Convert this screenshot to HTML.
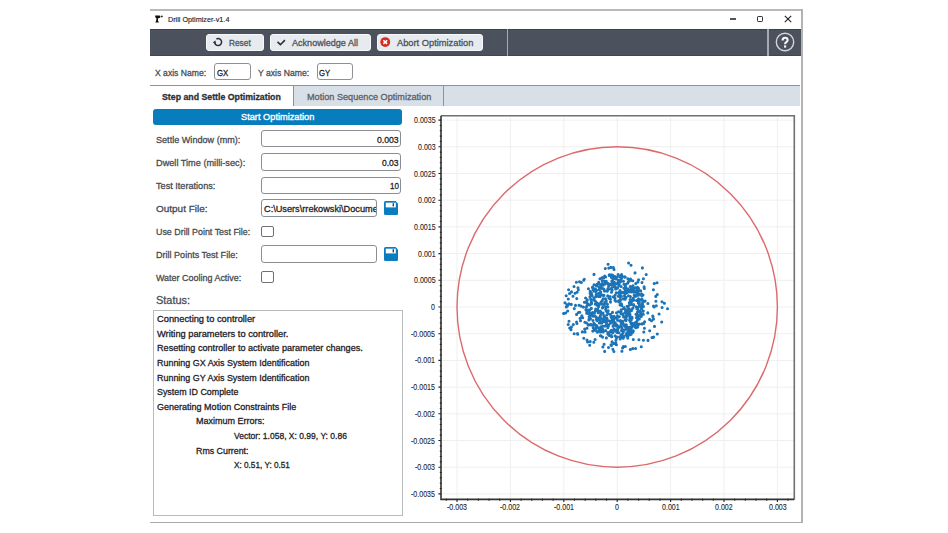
<!DOCTYPE html>
<html><head><meta charset="utf-8"><style>
html,body{margin:0;padding:0;background:#fff;width:948px;height:533px;overflow:hidden}
body{position:relative;font-family:"Liberation Sans",sans-serif}
.r{position:absolute;box-sizing:content-box}
.t{position:absolute;white-space:nowrap;line-height:normal;transform-origin:0 0}
</style></head><body>
<div class="r" style="left:150px;top:9.4px;width:652.6px;height:1.8px;background:#b9b9b9"></div>
<div class="r" style="left:801px;top:9.4px;width:1.6px;height:514px;background:#b3b3b3"></div>
<div class="r" style="left:150px;top:521.5px;width:652px;height:1.6px;background:#a9a9a9"></div>
<svg class="r" style="left:155px;top:15px" width="8" height="8" viewBox="0 0 8 8">
<path d="M0.2 0.4 H4.0 Q5.5 0.4 5.5 1.8 Q5.5 3.1 4.0 3.1 H3.3 L2.9 5.6 L3.9 7.6 H0.4 L1.2 5.6 L1.5 3.1 Q0.2 3.1 0.2 1.8 Z" fill="#111"/>
<rect x="6.0" y="0.7" width="1.7" height="1.5" fill="#222"/></svg>
<div class="t" style="transform:scaleX(0.8923);left:167.9px;top:15px;font-size:8.1px;color:#1d1d2a;font-weight:normal;-webkit-text-stroke:0.15px #1d1d2a;">Drill Optimizer-v1.4</div>
<div class="r" style="left:729.6px;top:18.3px;width:6px;height:1.4px;background:#555"></div>
<div class="r" style="left:756.8px;top:15.6px;width:4.3px;height:4.3px;border:1.2px solid #333;border-radius:1.2px"></div>
<svg class="r" style="left:784px;top:15px" width="8" height="8" viewBox="0 0 8 8"><path d="M0.8 0.8 L7.2 7.2 M7.2 0.8 L0.8 7.2" stroke="#222" stroke-width="1.1"/></svg>
<div class="r" style="left:150px;top:28.6px;width:651px;height:27.2px;background:#4b525e"></div>
<div class="r" style="left:150px;top:28.6px;width:651px;height:1.2px;background:#3a4149"></div>
<div class="r" style="left:150px;top:54.8px;width:651px;height:1px;background:#40474f"></div>
<div class="r" style="left:506.6px;top:28.6px;width:1.6px;height:27.2px;background:#a4aab1"></div>
<div class="r" style="left:767px;top:28.6px;width:1.6px;height:27.2px;background:#a4aab1"></div>
<div class="r" style="left:206.2px;top:33.6px;width:55.4px;height:15.0px;background:#e7eaee;border:1px solid #f7f8fa;border-radius:3px"></div>
<div class="r" style="left:269.8px;top:33.6px;width:99.0px;height:15.0px;background:#e7eaee;border:1px solid #f7f8fa;border-radius:3px"></div>
<div class="r" style="left:376.9px;top:33.6px;width:104.0px;height:15.0px;background:#e7eaee;border:1px solid #f7f8fa;border-radius:3px"></div>
<svg class="r" style="left:212px;top:36.3px" width="12" height="12" viewBox="0 0 12 12"><path d="M4.4 3.0 A3.5 3.5 0 1 1 2.6 6.4" fill="none" stroke="#2b2e33" stroke-width="1.5"/><path d="M0.8 6.2 L3.6 4.6 L3.8 7.9 Z" fill="#2b2e33"/></svg>
<div class="t" style="transform:scaleX(0.8573);left:229px;top:37px;font-size:9.7px;color:#4a515b;font-weight:normal;-webkit-text-stroke:0.3px #4a515b;">Reset</div>
<svg class="r" style="left:275px;top:37px" width="11" height="11" viewBox="0 0 11 11"><path d="M2.5 4.9 L5.4 7.7 L9.9 3.1" fill="none" stroke="#2b2e33" stroke-width="1.6"/></svg>
<div class="t" style="transform:scaleX(0.9355);left:292.4px;top:37px;font-size:9.7px;color:#4a515b;font-weight:normal;-webkit-text-stroke:0.3px #4a515b;">Acknowledge All</div>
<svg class="r" style="left:380px;top:36px" width="12" height="12" viewBox="0 0 12 12"><circle cx="5.25" cy="6.1" r="4.95" fill="#d52b20"/><path d="M3.4 4.25 L7.1 7.95 M7.1 4.25 L3.4 7.95" stroke="#fff" stroke-width="1.7"/></svg>
<div class="t" style="transform:scaleX(0.9587);left:397px;top:37px;font-size:9.7px;color:#4a515b;font-weight:normal;-webkit-text-stroke:0.3px #4a515b;">Abort Optimization</div>
<svg class="r" style="left:775px;top:32px" width="20" height="20" viewBox="0 0 20 20"><circle cx="10" cy="10" r="8.7" fill="none" stroke="#d2d6da" stroke-width="1.4"/>
<path d="M7.6 8.4 Q7.6 5.8 10.1 5.8 Q12.6 5.8 12.6 8.1 Q12.6 9.5 11.2 10.2 Q10.1 10.8 10.1 12.2" fill="none" stroke="#f6f7f8" stroke-width="2.1"/><rect x="9" y="13.4" width="2.2" height="2.2" fill="#f6f7f8"/></svg>
<div class="t" style="transform:scaleX(0.8770);left:155.4px;top:67px;font-size:9.8px;color:#464b53;font-weight:normal;-webkit-text-stroke:0.3px #464b53;">X axis Name:</div>
<div class="r" style="left:214.2px;top:63.4px;width:34.6px;height:15px;border:1.2px solid #8d9196;border-radius:3px;background:#fff"></div>
<div class="t" style="transform:scaleX(0.8071);left:216.5px;top:67px;font-size:9.7px;color:#1a1a1a;font-weight:normal;-webkit-text-stroke:0.3px #1a1a1a;">GX</div>
<div class="t" style="transform:scaleX(0.8798);left:258.2px;top:67px;font-size:9.8px;color:#464b53;font-weight:normal;-webkit-text-stroke:0.3px #464b53;">Y axis Name:</div>
<div class="r" style="left:316.7px;top:63.4px;width:34.6px;height:15px;border:1.2px solid #8d9196;border-radius:3px;background:#fff"></div>
<div class="t" style="transform:scaleX(0.7929);left:318.8px;top:67px;font-size:9.7px;color:#1a1a1a;font-weight:normal;-webkit-text-stroke:0.3px #1a1a1a;">GY</div>
<div class="r" style="left:293.5px;top:86px;width:506.5px;height:20px;background:#d9dfe6"></div>
<div class="r" style="left:150px;top:85px;width:650px;height:1.2px;background:#8e9399"></div>
<div class="r" style="left:293px;top:86px;width:1.2px;height:20px;background:#8e9399"></div>
<div class="r" style="left:443px;top:86px;width:1.2px;height:20px;background:#8e9399"></div>
<div class="t" style="transform:scaleX(0.9537);left:162.4px;top:92px;font-size:9.2px;color:#2c3038;font-weight:bold;-webkit-text-stroke:0.3px #2c3038;">Step and Settle Optimization</div>
<div class="t" style="transform:scaleX(0.9607);left:306.6px;top:91px;font-size:9.5px;color:#59606a;font-weight:normal;-webkit-text-stroke:0.3px #59606a;">Motion Sequence Optimization</div>
<div class="r" style="left:152.7px;top:109px;width:249.2px;height:15.6px;background:#077dbd;border-radius:3px"></div>
<div class="t" style="transform:scaleX(0.9427);left:240.6px;top:111px;font-size:9.8px;color:#fff;font-weight:normal;-webkit-text-stroke:0.35px #fff;">Start Optimization</div>
<div class="t" style="transform:scaleX(0.9283);left:155.6px;top:134px;font-size:9.8px;color:#464b53;font-weight:normal;-webkit-text-stroke:0.3px #464b53;">Settle Window (mm):</div>
<div class="t" style="transform:scaleX(0.9365);left:155.6px;top:157px;font-size:9.8px;color:#464b53;font-weight:normal;-webkit-text-stroke:0.3px #464b53;">Dwell Time (milli-sec):</div>
<div class="t" style="transform:scaleX(0.9307);left:155.6px;top:180px;font-size:9.8px;color:#464b53;font-weight:normal;-webkit-text-stroke:0.3px #464b53;">Test Iterations:</div>
<div class="t" style="transform:scaleX(1.0170);left:155.6px;top:203px;font-size:9.8px;color:#464b53;font-weight:normal;-webkit-text-stroke:0.3px #464b53;">Output File:</div>
<div class="t" style="transform:scaleX(0.9074);left:155.6px;top:226px;font-size:9.8px;color:#464b53;font-weight:normal;-webkit-text-stroke:0.3px #464b53;">Use Drill Point Test File:</div>
<div class="t" style="transform:scaleX(0.9225);left:155.6px;top:249px;font-size:9.8px;color:#464b53;font-weight:normal;-webkit-text-stroke:0.3px #464b53;">Drill Points Test File:</div>
<div class="t" style="transform:scaleX(0.9143);left:155.6px;top:272px;font-size:9.8px;color:#464b53;font-weight:normal;-webkit-text-stroke:0.3px #464b53;">Water Cooling Active:</div>
<div class="r" style="left:261.3px;top:130.3px;width:137.3px;height:15.2px;border:1.2px solid #8a8e93;border-radius:3px;background:#fff"></div>
<div class="r" style="left:261.3px;top:153.4px;width:137.3px;height:15.2px;border:1.2px solid #8a8e93;border-radius:3px;background:#fff"></div>
<div class="r" style="left:261.3px;top:176.5px;width:137.3px;height:15.1px;border:1.2px solid #8a8e93;border-radius:3px;background:#fff"></div>
<div class="r" style="left:261.3px;top:199.3px;width:113.3px;height:15.6px;border:1.2px solid #8a8e93;border-radius:3px;background:#fff"></div>
<div class="r" style="left:261.3px;top:245.4px;width:113.3px;height:15.6px;border:1.2px solid #8a8e93;border-radius:3px;background:#fff"></div>
<div class="t" style="transform:scaleX(0.9125);left:377.2px;top:134px;font-size:9.5px;color:#222;font-weight:normal;-webkit-text-stroke:0.3px #222;">0.003</div>
<div class="t" style="transform:scaleX(0.8973);left:382.3px;top:157px;font-size:9.5px;color:#222;font-weight:normal;-webkit-text-stroke:0.3px #222;">0.03</div>
<div class="t" style="transform:scaleX(0.8414);left:390px;top:180px;font-size:9.5px;color:#222;font-weight:normal;-webkit-text-stroke:0.3px #222;">10</div>
<div class="r" style="left:262.5px;top:200.5px;width:113.5px;height:15.6px;overflow:hidden"><div class="t" style="transform:scaleX(0.9667);left:1.3px;top:2px;font-size:9.5px;color:#222;font-weight:normal;-webkit-text-stroke:0.3px #222;">C:\Users\rrekowski\Docume</div></div>
<div class="r" style="left:261.2px;top:225.8px;width:10.6px;height:9.6px;border:1.2px solid #6d7176;border-radius:2px;background:#fff"></div>
<div class="r" style="left:261.2px;top:271.3px;width:10.6px;height:9.6px;border:1.2px solid #6d7176;border-radius:2px;background:#fff"></div>
<svg class="r" style="left:383.7px;top:201.2px" width="14" height="14" viewBox="0 0 14 14"><path d="M0 1.5 Q0 0 1.5 0 H11.5 L14 2.5 V12.5 Q14 14 12.5 14 H1.5 Q0 14 0 12.5 Z" fill="#0b7cc0"/><rect x="1.8" y="1.7" width="10" height="4.7" fill="#fff"/><rect x="8.6" y="2.2" width="1.4" height="3.2" fill="#0b4a78"/></svg>
<svg class="r" style="left:383.7px;top:247.2px" width="14" height="14" viewBox="0 0 14 14"><path d="M0 1.5 Q0 0 1.5 0 H11.5 L14 2.5 V12.5 Q14 14 12.5 14 H1.5 Q0 14 0 12.5 Z" fill="#0b7cc0"/><rect x="1.8" y="1.7" width="10" height="4.7" fill="#fff"/><rect x="8.6" y="2.2" width="1.4" height="3.2" fill="#0b4a78"/></svg>
<div class="t" style="transform:scaleX(0.9791);left:155.6px;top:294px;font-size:11.2px;color:#4a4f57;font-weight:normal;-webkit-text-stroke:0.3px #4a4f57;">Status:</div>
<div class="r" style="left:152.8px;top:309.6px;width:248px;height:204.6px;border:1px solid #b8bbbe;background:#fff"></div>
<div class="t" style="transform:scaleX(0.9691);left:156.7px;top:313px;font-size:9.6px;color:#1e2126;font-weight:normal;-webkit-text-stroke:0.3px #1e2126;">Connecting to controller</div>
<div class="t" style="transform:scaleX(0.9676);left:156.7px;top:328px;font-size:9.6px;color:#1e2126;font-weight:normal;-webkit-text-stroke:0.3px #1e2126;">Writing parameters to controller.</div>
<div class="t" style="transform:scaleX(0.9482);left:156.7px;top:342px;font-size:9.6px;color:#1e2126;font-weight:normal;-webkit-text-stroke:0.3px #1e2126;">Resetting controller to activate parameter changes.</div>
<div class="t" style="transform:scaleX(0.9309);left:156.7px;top:357px;font-size:9.6px;color:#1e2126;font-weight:normal;-webkit-text-stroke:0.3px #1e2126;">Running GX Axis System Identification</div>
<div class="t" style="transform:scaleX(0.9318);left:156.7px;top:372px;font-size:9.6px;color:#1e2126;font-weight:normal;-webkit-text-stroke:0.3px #1e2126;">Running GY Axis System Identification</div>
<div class="t" style="transform:scaleX(0.9252);left:156.7px;top:386px;font-size:9.6px;color:#1e2126;font-weight:normal;-webkit-text-stroke:0.3px #1e2126;">System ID Complete</div>
<div class="t" style="transform:scaleX(0.9396);left:156.7px;top:401px;font-size:9.6px;color:#1e2126;font-weight:normal;-webkit-text-stroke:0.3px #1e2126;">Generating Motion Constraints File</div>
<div class="t" style="transform:scaleX(0.9380);left:195.9px;top:415px;font-size:9.6px;color:#1e2126;font-weight:normal;-webkit-text-stroke:0.3px #1e2126;">Maximum Errors:</div>
<div class="t" style="transform:scaleX(0.8868);left:233.9px;top:430px;font-size:9.6px;color:#1e2126;font-weight:normal;-webkit-text-stroke:0.3px #1e2126;">Vector: 1.058, X: 0.99, Y: 0.86</div>
<div class="t" style="transform:scaleX(0.9203);left:195.9px;top:445px;font-size:9.6px;color:#1e2126;font-weight:normal;-webkit-text-stroke:0.3px #1e2126;">Rms Current:</div>
<div class="t" style="transform:scaleX(0.8543);left:233.9px;top:459px;font-size:9.6px;color:#1e2126;font-weight:normal;-webkit-text-stroke:0.3px #1e2126;">X: 0.51, Y: 0.51</div>
<svg class="r" style="left:0;top:0" width="948" height="533"><line x1="457.00" y1="115.7" x2="457.00" y2="499.4" stroke="#efefef" stroke-width="1"/>
<line x1="510.40" y1="115.7" x2="510.40" y2="499.4" stroke="#efefef" stroke-width="1"/>
<line x1="563.80" y1="115.7" x2="563.80" y2="499.4" stroke="#efefef" stroke-width="1"/>
<line x1="617.20" y1="115.7" x2="617.20" y2="499.4" stroke="#efefef" stroke-width="1"/>
<line x1="670.60" y1="115.7" x2="670.60" y2="499.4" stroke="#efefef" stroke-width="1"/>
<line x1="724.00" y1="115.7" x2="724.00" y2="499.4" stroke="#efefef" stroke-width="1"/>
<line x1="777.40" y1="115.7" x2="777.40" y2="499.4" stroke="#efefef" stroke-width="1"/>
<line x1="441.0" y1="493.90" x2="794.3" y2="493.90" stroke="#efefef" stroke-width="1"/>
<line x1="441.0" y1="467.20" x2="794.3" y2="467.20" stroke="#efefef" stroke-width="1"/>
<line x1="441.0" y1="440.50" x2="794.3" y2="440.50" stroke="#efefef" stroke-width="1"/>
<line x1="441.0" y1="413.80" x2="794.3" y2="413.80" stroke="#efefef" stroke-width="1"/>
<line x1="441.0" y1="387.10" x2="794.3" y2="387.10" stroke="#efefef" stroke-width="1"/>
<line x1="441.0" y1="360.40" x2="794.3" y2="360.40" stroke="#efefef" stroke-width="1"/>
<line x1="441.0" y1="333.70" x2="794.3" y2="333.70" stroke="#efefef" stroke-width="1"/>
<line x1="441.0" y1="307.00" x2="794.3" y2="307.00" stroke="#efefef" stroke-width="1"/>
<line x1="441.0" y1="280.30" x2="794.3" y2="280.30" stroke="#efefef" stroke-width="1"/>
<line x1="441.0" y1="253.60" x2="794.3" y2="253.60" stroke="#efefef" stroke-width="1"/>
<line x1="441.0" y1="226.90" x2="794.3" y2="226.90" stroke="#efefef" stroke-width="1"/>
<line x1="441.0" y1="200.20" x2="794.3" y2="200.20" stroke="#efefef" stroke-width="1"/>
<line x1="441.0" y1="173.50" x2="794.3" y2="173.50" stroke="#efefef" stroke-width="1"/>
<line x1="441.0" y1="146.80" x2="794.3" y2="146.80" stroke="#efefef" stroke-width="1"/>
<line x1="441.0" y1="120.10" x2="794.3" y2="120.10" stroke="#efefef" stroke-width="1"/>
<circle cx="617.2" cy="307.0" r="160.20" fill="none" stroke="#dc6a6c" stroke-width="1.4"/>
<path d="M601.0 302.3h0M600.8 294.3h0M636.5 317.7h0M618.3 301.2h0M616.7 324.7h0M586.7 313.2h0M588.8 311.6h0M628.9 329.0h0M631.0 287.1h0M614.0 282.4h0M637.3 317.9h0M593.8 291.1h0M631.4 310.7h0M588.5 312.3h0M633.2 287.2h0M637.0 293.4h0M621.1 286.5h0M633.3 298.0h0M637.6 325.1h0M617.6 320.2h0M588.9 319.9h0M607.9 332.5h0M599.4 322.9h0M600.0 296.6h0M633.7 292.3h0M637.0 294.9h0M642.1 305.2h0M627.7 330.7h0M641.6 300.1h0M590.1 293.5h0M621.2 334.7h0M591.4 293.3h0M630.0 314.2h0M642.1 305.0h0M618.3 296.2h0M626.3 324.8h0M617.1 288.3h0M641.4 315.6h0M637.3 314.4h0M603.1 332.0h0M642.4 303.2h0M636.2 306.8h0M630.0 316.0h0M637.5 312.1h0M603.8 315.6h0M627.9 329.0h0M620.4 300.5h0M631.4 302.0h0M595.3 329.1h0M595.3 304.1h0M595.8 291.6h0M599.2 289.6h0M587.0 305.6h0M611.6 284.9h0M610.5 323.2h0M586.7 302.6h0M636.9 308.8h0M598.4 296.4h0M610.5 302.1h0M636.9 316.9h0M592.5 312.6h0M600.7 329.3h0M613.4 278.7h0M621.2 309.8h0M638.6 300.6h0M600.6 311.7h0M605.6 330.6h0M608.3 326.2h0M600.3 295.2h0M603.4 320.3h0M640.5 312.0h0M613.1 281.5h0M618.1 326.0h0M617.1 337.1h0M603.0 313.1h0M634.8 323.9h0M606.7 324.0h0M590.5 318.6h0M628.3 334.2h0M605.0 290.8h0M589.1 316.6h0M625.7 318.5h0M623.0 330.1h0M629.0 281.3h0M612.8 322.0h0M598.7 283.4h0M600.4 332.0h0M612.2 319.7h0M611.7 336.8h0M600.0 317.1h0M599.0 318.9h0M630.8 333.8h0M620.1 304.9h0M642.5 304.4h0M633.8 300.1h0M620.1 338.9h0M628.3 282.1h0M591.5 303.7h0M606.4 322.7h0M628.4 314.0h0M610.0 332.3h0M640.4 315.5h0M605.6 277.0h0M637.5 287.4h0M590.7 292.2h0M615.0 300.2h0M611.2 321.1h0M591.6 302.7h0M632.9 298.8h0M602.7 329.3h0M625.0 293.6h0M619.3 283.9h0M620.9 326.3h0M624.0 284.3h0M618.5 292.7h0M624.8 276.7h0M641.7 308.4h0M630.3 286.6h0M614.1 316.2h0M599.8 303.9h0M596.2 310.8h0M640.9 307.3h0M621.0 313.8h0M625.4 312.4h0M632.7 280.7h0M605.5 306.9h0M608.6 324.9h0M604.5 290.7h0M600.8 326.9h0M608.8 320.7h0M604.7 302.6h0M597.1 326.5h0M619.3 316.8h0M600.8 294.2h0M596.3 327.4h0M596.5 285.9h0M601.7 323.1h0M609.1 284.0h0M608.6 286.2h0M615.8 330.2h0M607.9 283.6h0M607.1 311.8h0M629.3 291.7h0M595.4 330.1h0M622.2 276.2h0M600.1 311.0h0M619.5 295.1h0M633.3 289.1h0M602.3 280.9h0M592.1 295.7h0M606.3 300.7h0M618.5 311.8h0M639.9 315.2h0M623.3 313.7h0M627.0 335.5h0M618.8 300.7h0M621.4 296.3h0M627.6 283.2h0M590.2 291.4h0M640.6 313.8h0M589.7 304.9h0M634.6 324.8h0M638.4 295.3h0M611.3 315.9h0M625.6 284.5h0M621.6 322.6h0M603.9 295.4h0M595.3 325.1h0M600.8 319.6h0M599.8 317.0h0M605.6 307.0h0M590.7 324.3h0M628.7 331.7h0M616.1 278.9h0M591.3 304.0h0M602.4 288.5h0M631.5 332.7h0M615.1 295.3h0M587.5 303.5h0M611.4 284.7h0M613.8 322.3h0M603.4 298.9h0M617.1 326.3h0M638.5 298.9h0M610.7 288.9h0M626.8 289.5h0M612.8 332.8h0M629.3 309.4h0M600.1 322.9h0M607.0 318.4h0M617.8 287.6h0M627.1 306.2h0M598.6 293.2h0M625.5 286.9h0M590.4 296.3h0M611.5 283.7h0M593.3 325.3h0M639.5 299.9h0M617.8 330.1h0M612.2 290.3h0M638.5 299.9h0M616.5 338.1h0M614.5 322.5h0M611.5 292.2h0M637.0 288.6h0M625.3 293.8h0M600.3 316.0h0M636.6 321.8h0M620.2 297.0h0M605.1 321.7h0M605.1 283.9h0M612.5 312.4h0M595.7 309.0h0M603.1 298.8h0M593.2 327.8h0M631.1 324.1h0M607.2 291.3h0M623.4 298.9h0M638.0 325.3h0M595.3 330.2h0M616.4 277.4h0M607.9 290.1h0M623.4 281.3h0M615.6 289.0h0M601.9 277.8h0M631.5 323.3h0M602.8 326.2h0M604.4 281.2h0M624.4 330.3h0M599.2 287.1h0M625.3 297.4h0M632.2 326.1h0M632.9 332.2h0M612.0 287.5h0M593.8 298.1h0M592.4 314.2h0M622.7 324.3h0M613.3 296.9h0M590.7 299.2h0M599.3 329.5h0M603.6 319.0h0M641.5 315.2h0M615.6 331.2h0M599.6 330.5h0M601.0 318.4h0M618.1 282.2h0M625.3 290.2h0M613.8 319.3h0M623.0 314.7h0M611.5 277.5h0M620.1 321.2h0M614.4 284.9h0M615.0 276.6h0M628.9 327.8h0M621.7 327.3h0M595.7 296.7h0M615.2 322.9h0M640.6 312.6h0M635.5 287.9h0M594.1 329.0h0M596.2 294.4h0M638.3 303.1h0M607.8 333.7h0M588.3 310.1h0M611.9 281.0h0M615.8 301.2h0M591.4 308.4h0M594.5 313.0h0M601.9 304.1h0M607.8 307.0h0M593.1 316.3h0M636.6 300.5h0M633.3 330.9h0M596.6 286.0h0M610.1 314.2h0M628.2 315.0h0M634.7 296.3h0M626.9 292.7h0M631.4 328.1h0M593.5 288.5h0M609.2 275.4h0M601.2 331.2h0M639.0 294.4h0M590.2 319.0h0M589.9 309.8h0M625.5 310.3h0M618.1 317.3h0M602.7 307.3h0M591.4 300.4h0M603.8 289.1h0M599.0 311.2h0M594.5 324.0h0M625.8 298.0h0M598.6 328.3h0M597.4 303.2h0M618.9 332.8h0M616.5 312.7h0M631.2 330.4h0M622.0 328.8h0M621.9 321.2h0M624.5 326.0h0M620.4 312.0h0M602.5 307.9h0M623.6 308.4h0M598.6 319.5h0M638.5 315.9h0M600.2 320.2h0M621.8 305.3h0M627.0 316.2h0M625.6 327.2h0M602.0 329.0h0M625.8 311.1h0M611.3 335.5h0M589.9 313.5h0M606.4 337.9h0M613.7 324.4h0M597.1 284.9h0M629.8 318.2h0M638.9 301.6h0M637.8 307.6h0M621.1 311.3h0M627.7 310.4h0M610.5 299.2h0M623.6 337.4h0M586.8 311.8h0M637.9 292.0h0M642.8 314.0h0M602.2 295.1h0M639.3 324.1h0M624.8 291.8h0M606.8 315.0h0M607.8 288.9h0M628.0 335.8h0M612.7 278.1h0M590.0 296.9h0M597.0 331.5h0M617.7 328.9h0M589.6 310.6h0M622.8 322.8h0M595.6 289.3h0M596.5 325.6h0M626.9 326.6h0M639.6 311.1h0M616.3 283.7h0M635.0 322.9h0M623.4 292.8h0M632.2 288.2h0M589.3 316.7h0M612.2 275.3h0M603.4 321.5h0M607.9 313.2h0M637.7 327.1h0M632.3 323.3h0M609.6 298.2h0M629.4 312.2h0M607.7 295.9h0M637.6 308.9h0M629.5 303.6h0M602.0 300.7h0M618.9 285.2h0M620.7 281.4h0M623.4 330.0h0M626.7 314.2h0M635.4 326.9h0M621.6 305.4h0M625.9 297.2h0M605.7 309.4h0M622.1 292.4h0M600.7 286.3h0M632.9 285.8h0M601.2 294.8h0M630.3 321.6h0M593.1 289.8h0M622.4 336.3h0M594.1 312.6h0M637.3 320.4h0M597.7 309.0h0M606.6 303.6h0M593.0 320.5h0M596.6 290.2h0M606.9 320.2h0M600.4 335.8h0M632.0 318.3h0M622.4 321.2h0M611.0 274.9h0M642.4 304.3h0M636.1 295.9h0M596.4 319.2h0M638.5 288.3h0M587.0 310.2h0M593.8 323.4h0M640.7 290.9h0M630.1 299.5h0M626.1 315.7h0M608.4 334.6h0M601.6 288.2h0M615.0 298.3h0M600.8 314.5h0M614.3 286.8h0M609.3 335.4h0M612.0 318.5h0M632.0 317.3h0M616.2 292.9h0M639.4 302.8h0M635.7 283.6h0M624.8 324.8h0M598.9 311.4h0M594.6 300.6h0M626.0 290.5h0M599.6 311.3h0M624.8 277.3h0M616.0 325.9h0M641.4 308.9h0M603.9 304.4h0M626.1 328.5h0M617.5 315.9h0M590.2 313.3h0M621.6 274.6h0M643.3 314.3h0M628.4 308.3h0M604.9 326.1h0M607.4 304.3h0M611.4 317.7h0M620.0 290.5h0M614.0 329.1h0M608.2 310.8h0M604.7 283.1h0M625.2 277.0h0M625.1 320.1h0M621.5 278.5h0M625.4 285.8h0M611.2 331.8h0M627.9 308.6h0M634.0 290.6h0M588.0 313.5h0M636.7 295.0h0M594.2 288.7h0M596.2 304.5h0M620.4 320.5h0M639.4 305.6h0M597.0 320.7h0M598.2 312.7h0M590.2 315.9h0M631.2 334.3h0M598.5 304.3h0M626.5 289.3h0M639.3 294.2h0M637.7 312.1h0M594.0 299.1h0M611.4 330.4h0M636.1 292.0h0M610.1 296.5h0M597.1 305.1h0M641.9 299.1h0M623.2 332.6h0M626.9 336.3h0M623.9 288.3h0M613.0 326.3h0M641.8 295.7h0M602.0 319.2h0M626.0 320.6h0M630.2 304.8h0M616.4 317.8h0M627.2 314.6h0M614.3 282.3h0M597.0 284.4h0M641.6 308.0h0M630.7 302.5h0M614.2 317.3h0M612.9 330.5h0M636.0 314.3h0M629.4 302.5h0M625.1 299.3h0M628.2 306.3h0M600.7 284.8h0M626.4 311.6h0M626.6 333.3h0M621.1 293.1h0M641.2 316.5h0M587.3 299.9h0M629.6 320.2h0M633.7 305.3h0M626.0 320.5h0M623.6 316.9h0M630.4 296.6h0M618.5 317.1h0M643.4 306.4h0M615.9 340.3h0M632.1 300.8h0M609.3 284.3h0M631.8 309.6h0M615.0 286.7h0M591.7 294.5h0M595.6 301.5h0M596.0 302.1h0M623.4 336.3h0M635.9 296.3h0M626.7 335.0h0M630.5 279.1h0M613.9 321.6h0M628.2 312.2h0M591.0 324.9h0M635.7 327.7h0M619.2 302.0h0M641.2 305.4h0M591.3 302.6h0M636.6 323.2h0M595.0 316.0h0M605.5 298.8h0M598.2 306.2h0M607.6 326.1h0M600.8 294.8h0M641.7 294.0h0M629.0 280.1h0M631.1 304.3h0M626.4 319.6h0M612.9 283.0h0M604.5 291.1h0M630.9 303.2h0M595.5 310.2h0M630.4 289.5h0M586.8 301.1h0M600.7 291.7h0M607.2 311.7h0M619.8 276.4h0M620.4 299.2h0M633.5 304.5h0M619.2 327.3h0M631.4 290.2h0M628.3 290.4h0M599.3 328.8h0M598.7 306.4h0M602.1 322.6h0M631.9 287.7h0M628.8 327.6h0M605.3 319.0h0M629.9 327.4h0M611.1 316.9h0M630.9 310.4h0M634.2 295.2h0M613.5 282.2h0M629.1 280.9h0M589.2 318.6h0M632.8 326.2h0M595.5 328.9h0M630.9 292.0h0M621.1 324.3h0M593.7 289.2h0M624.7 309.0h0M632.9 308.0h0M626.0 335.1h0M603.1 318.7h0M596.0 317.0h0M602.7 284.3h0M631.2 319.9h0M604.8 276.0h0M606.2 311.0h0M640.5 305.5h0M624.0 307.6h0M597.1 318.1h0M627.9 278.8h0M600.2 316.7h0M632.0 289.8h0M604.5 317.0h0M609.0 298.2h0M621.4 303.9h0M596.1 296.0h0M616.3 318.1h0M627.8 288.8h0M610.5 331.4h0M600.0 278.7h0M621.5 330.6h0M628.5 295.8h0M603.9 304.4h0M601.1 328.1h0M636.8 291.1h0M613.2 275.9h0M628.1 312.9h0M607.8 327.8h0M624.5 295.7h0M630.5 280.2h0M653.0 337.5h0M574.2 333.7h0M628.6 334.5h0M586.3 307.2h0M638.6 279.7h0M661.7 322.0h0M584.7 329.0h0M615.1 335.9h0M602.8 277.8h0M644.4 328.2h0M582.7 317.7h0M616.4 344.8h0M625.3 346.5h0M579.5 281.7h0M615.4 278.1h0M576.8 298.6h0M584.3 279.3h0M653.5 319.1h0M646.2 274.5h0M578.3 289.7h0M644.3 288.4h0M623.4 346.5h0M664.4 303.3h0M653.5 306.1h0M633.3 339.5h0M590.2 341.6h0M574.0 286.5h0M584.4 302.3h0M565.6 313.0h0M643.4 278.8h0M574.3 308.6h0M635.0 272.9h0M643.7 323.4h0M569.6 293.5h0M644.1 286.9h0M566.2 295.7h0M642.4 267.9h0M602.9 347.0h0M603.1 285.3h0M587.0 340.1h0M577.1 292.2h0M603.7 277.9h0M582.3 331.9h0M585.6 298.0h0M609.3 274.9h0M588.9 324.7h0M586.6 323.0h0M649.7 330.7h0M585.9 309.8h0M581.0 306.1h0M642.0 323.9h0M653.4 289.7h0M565.0 302.8h0M651.5 320.8h0M600.9 335.9h0M653.6 337.1h0M563.7 313.5h0M612.1 341.9h0M635.6 348.5h0M571.3 304.4h0M621.0 336.1h0M628.6 263.0h0M654.2 283.5h0M606.3 281.4h0M622.6 347.9h0M655.9 301.3h0M618.1 274.5h0M598.7 282.2h0M579.0 305.3h0M642.0 282.5h0M567.4 305.9h0M573.3 324.6h0M612.9 349.3h0M578.0 287.8h0M653.0 316.8h0M594.1 284.8h0M617.0 277.2h0M655.8 296.4h0M608.1 264.3h0M652.8 316.1h0M614.0 269.4h0M630.3 349.5h0M647.9 303.5h0M567.7 311.0h0M643.4 340.2h0M594.0 274.4h0M638.9 339.7h0M592.4 287.4h0M648.0 340.4h0M639.3 318.9h0M577.5 333.6h0M656.3 305.7h0M611.4 345.6h0M662.1 307.5h0M603.6 277.1h0M647.8 312.9h0M595.1 339.5h0M657.3 334.0h0M577.7 334.3h0M569.0 321.3h0M593.8 342.3h0M581.8 315.9h0M587.6 341.9h0M584.9 322.3h0M602.8 331.4h0M573.0 296.3h0M604.1 344.2h0M643.3 311.1h0M627.8 338.1h0M611.0 344.7h0M576.4 282.3h0M611.0 267.4h0M576.9 323.4h0M649.6 319.4h0M566.3 307.0h0M643.0 295.1h0M583.7 280.3h0M643.8 332.0h0M641.3 346.8h0M654.1 306.9h0M583.4 307.1h0M615.8 343.0h0M571.0 329.8h0M587.6 311.0h0M608.1 283.9h0M657.0 282.7h0M601.9 284.5h0M578.5 312.5h0M602.6 337.1h0M592.6 287.3h0M645.1 301.1h0M643.6 301.4h0M644.6 321.7h0M568.3 299.0h0M566.9 304.8h0M654.5 326.4h0M569.0 303.9h0M667.5 308.8h0M601.8 283.9h0M569.7 328.0h0M571.5 291.9h0M576.6 314.4h0M659.1 314.0h0M612.4 275.0h0M579.8 312.2h0M592.8 331.1h0M613.4 267.5h0M563.6 313.5h0M597.4 332.3h0M617.1 332.5h0M581.3 282.5h0M630.0 334.8h0M628.6 331.1h0M613.8 343.5h0M568.6 289.7h0M580.5 320.8h0M612.1 282.1h0M583.8 338.3h0M608.5 347.5h0M619.9 336.7h0M588.4 288.8h0M608.8 268.1h0M618.4 280.2h0M585.1 331.9h0M576.6 322.0h0M588.2 325.1h0M605.3 268.5h0M632.8 348.6h0M631.0 265.3h0M662.0 301.8h0M620.6 279.5h0M652.0 337.6h0M657.3 294.5h0M637.9 281.9h0M568.2 324.5h0M622.2 334.4h0M571.4 327.1h0M580.1 318.4h0M613.9 351.5h0M642.0 299.4h0M587.0 328.3h0M604.7 351.4h0M638.5 289.9h0M621.5 337.1h0M621.9 351.3h0M589.7 345.2h0M623.1 338.3h0M575.0 293.2h0M575.5 305.4h0" stroke="#1c73b6" stroke-width="3.1" stroke-linecap="round" fill="none"/>
<path d="M441.0 115.7 H794.3 V499.4" fill="none" stroke="#707070" stroke-width="1.6"/>
<path d="M794.3 499.4 H441.0 V115.7" fill="none" stroke="#333" stroke-width="1.6"/>
<path d="M438.4 493.90H441.0M439.8 488.56H441.6M439.8 483.22H441.6M439.8 477.88H441.6M439.8 472.54H441.6M438.4 467.20H441.0M439.8 461.86H441.6M439.8 456.52H441.6M439.8 451.18H441.6M439.8 445.84H441.6M438.4 440.50H441.0M439.8 435.16H441.6M439.8 429.82H441.6M439.8 424.48H441.6M439.8 419.14H441.6M438.4 413.80H441.0M439.8 408.46H441.6M439.8 403.12H441.6M439.8 397.78H441.6M439.8 392.44H441.6M438.4 387.10H441.0M439.8 381.76H441.6M439.8 376.42H441.6M439.8 371.08H441.6M439.8 365.74H441.6M438.4 360.40H441.0M439.8 355.06H441.6M439.8 349.72H441.6M439.8 344.38H441.6M439.8 339.04H441.6M438.4 333.70H441.0M439.8 328.36H441.6M439.8 323.02H441.6M439.8 317.68H441.6M439.8 312.34H441.6M438.4 307.00H441.0M439.8 301.66H441.6M439.8 296.32H441.6M439.8 290.98H441.6M439.8 285.64H441.6M438.4 280.30H441.0M439.8 274.96H441.6M439.8 269.62H441.6M439.8 264.28H441.6M439.8 258.94H441.6M438.4 253.60H441.0M439.8 248.26H441.6M439.8 242.92H441.6M439.8 237.58H441.6M439.8 232.24H441.6M438.4 226.90H441.0M439.8 221.56H441.6M439.8 216.22H441.6M439.8 210.88H441.6M439.8 205.54H441.6M438.4 200.20H441.0M439.8 194.86H441.6M439.8 189.52H441.6M439.8 184.18H441.6M439.8 178.84H441.6M438.4 173.50H441.0M439.8 168.16H441.6M439.8 162.82H441.6M439.8 157.48H441.6M439.8 152.14H441.6M438.4 146.80H441.0M439.8 141.46H441.6M439.8 136.12H441.6M439.8 130.78H441.6M439.8 125.44H441.6M438.4 120.10H441.0M446.32 498.79999999999995V500.79999999999995M457.00 499.4V502.0M467.68 498.79999999999995V500.79999999999995M478.36 498.79999999999995V500.79999999999995M489.04 498.79999999999995V500.79999999999995M499.72 498.79999999999995V500.79999999999995M510.40 499.4V502.0M521.08 498.79999999999995V500.79999999999995M531.76 498.79999999999995V500.79999999999995M542.44 498.79999999999995V500.79999999999995M553.12 498.79999999999995V500.79999999999995M563.80 499.4V502.0M574.48 498.79999999999995V500.79999999999995M585.16 498.79999999999995V500.79999999999995M595.84 498.79999999999995V500.79999999999995M606.52 498.79999999999995V500.79999999999995M617.20 499.4V502.0M627.88 498.79999999999995V500.79999999999995M638.56 498.79999999999995V500.79999999999995M649.24 498.79999999999995V500.79999999999995M659.92 498.79999999999995V500.79999999999995M670.60 499.4V502.0M681.28 498.79999999999995V500.79999999999995M691.96 498.79999999999995V500.79999999999995M702.64 498.79999999999995V500.79999999999995M713.32 498.79999999999995V500.79999999999995M724.00 499.4V502.0M734.68 498.79999999999995V500.79999999999995M745.36 498.79999999999995V500.79999999999995M756.04 498.79999999999995V500.79999999999995M766.72 498.79999999999995V500.79999999999995M777.40 499.4V502.0M788.08 498.79999999999995V500.79999999999995" stroke="#222" stroke-width="1.1"/></svg>
<div class="t" style="transform:scaleX(0.8610);left:413.63px;top:116px;font-size:8.2px;color:#262626;font-weight:normal;-webkit-text-stroke:0.1px #262626;">0.0035</div>
<div class="t" style="transform:scaleX(0.8607);left:417.56px;top:143px;font-size:8.2px;color:#262626;font-weight:normal;-webkit-text-stroke:0.1px #262626;">0.003</div>
<div class="t" style="transform:scaleX(0.8610);left:413.63px;top:170px;font-size:8.2px;color:#262626;font-weight:normal;-webkit-text-stroke:0.1px #262626;">0.0025</div>
<div class="t" style="transform:scaleX(0.8607);left:417.56px;top:196px;font-size:8.2px;color:#262626;font-weight:normal;-webkit-text-stroke:0.1px #262626;">0.002</div>
<div class="t" style="transform:scaleX(0.8610);left:413.63px;top:223px;font-size:8.2px;color:#262626;font-weight:normal;-webkit-text-stroke:0.1px #262626;">0.0015</div>
<div class="t" style="transform:scaleX(0.8607);left:417.56px;top:250px;font-size:8.2px;color:#262626;font-weight:normal;-webkit-text-stroke:0.1px #262626;">0.001</div>
<div class="t" style="transform:scaleX(0.8610);left:413.63px;top:276px;font-size:8.2px;color:#262626;font-weight:normal;-webkit-text-stroke:0.1px #262626;">0.0005</div>
<div class="t" style="transform:scaleX(0.8594);left:431.28px;top:303px;font-size:8.2px;color:#262626;font-weight:normal;-webkit-text-stroke:0.1px #262626;">0</div>
<div class="t" style="transform:scaleX(0.8608);left:411.29px;top:330px;font-size:8.2px;color:#262626;font-weight:normal;-webkit-text-stroke:0.1px #262626;">-0.0005</div>
<div class="t" style="transform:scaleX(0.8610);left:415.21px;top:356px;font-size:8.2px;color:#262626;font-weight:normal;-webkit-text-stroke:0.1px #262626;">-0.001</div>
<div class="t" style="transform:scaleX(0.8608);left:411.29px;top:383px;font-size:8.2px;color:#262626;font-weight:normal;-webkit-text-stroke:0.1px #262626;">-0.0015</div>
<div class="t" style="transform:scaleX(0.8610);left:415.21px;top:410px;font-size:8.2px;color:#262626;font-weight:normal;-webkit-text-stroke:0.1px #262626;">-0.002</div>
<div class="t" style="transform:scaleX(0.8608);left:411.29px;top:437px;font-size:8.2px;color:#262626;font-weight:normal;-webkit-text-stroke:0.1px #262626;">-0.0025</div>
<div class="t" style="transform:scaleX(0.8610);left:415.21px;top:463px;font-size:8.2px;color:#262626;font-weight:normal;-webkit-text-stroke:0.1px #262626;">-0.003</div>
<div class="t" style="transform:scaleX(0.8608);left:411.29px;top:490px;font-size:8.2px;color:#262626;font-weight:normal;-webkit-text-stroke:0.1px #262626;">-0.0035</div>
<div class="t" style="transform:scaleX(0.8610);left:447.00379px;top:503px;font-size:8.2px;color:#262626;font-weight:normal;-webkit-text-stroke:0.1px #262626;">-0.003</div>
<div class="t" style="transform:scaleX(0.8610);left:500.40379px;top:503px;font-size:8.2px;color:#262626;font-weight:normal;-webkit-text-stroke:0.1px #262626;">-0.002</div>
<div class="t" style="transform:scaleX(0.8610);left:553.80379px;top:503px;font-size:8.2px;color:#262626;font-weight:normal;-webkit-text-stroke:0.1px #262626;">-0.001</div>
<div class="t" style="transform:scaleX(0.8594);left:615.239544px;top:503px;font-size:8.2px;color:#262626;font-weight:normal;-webkit-text-stroke:0.1px #262626;">0</div>
<div class="t" style="transform:scaleX(0.8607);left:661.777948px;top:503px;font-size:8.2px;color:#262626;font-weight:normal;-webkit-text-stroke:0.1px #262626;">0.001</div>
<div class="t" style="transform:scaleX(0.8607);left:715.177948px;top:503px;font-size:8.2px;color:#262626;font-weight:normal;-webkit-text-stroke:0.1px #262626;">0.002</div>
<div class="t" style="transform:scaleX(0.8607);left:768.5779480000001px;top:503px;font-size:8.2px;color:#262626;font-weight:normal;-webkit-text-stroke:0.1px #262626;">0.003</div>
</body></html>
